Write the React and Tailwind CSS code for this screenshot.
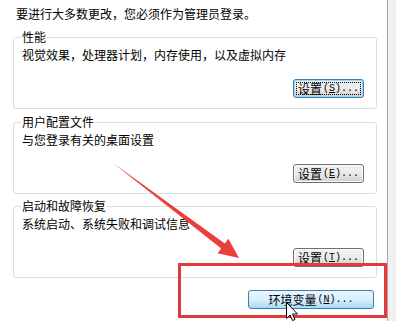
import React from 'react';

const font = { fontFamily: '"Noto Sans CJK SC", "Liberation Sans", sans-serif' };

const Button = ({ label, hotkey, focused, hover, className = '' }) => {
  const tone = hover
    ? 'border-[#3c7fb1] bg-gradient-to-b from-[#eaf6fd] via-[#d9f0fc] to-[#a7d9f5]'
    : focused
      ? 'border-[#3c7fb1] bg-gradient-to-b from-[#f2f2f2] via-[#ebebeb] to-[#cfcfcf] shadow-[inset_0_0_0_1px_#9fd8f7]'
      : 'border-[#707070] bg-gradient-to-b from-[#f2f2f2] via-[#ebebeb] to-[#cfcfcf] shadow-[inset_0_0_0_1px_#fcfcfc]';
  return (
    <div className={`h-[19px] rounded-[3px] border flex items-center justify-center p-[2px] ${tone} ${className}`}>
      <div
        className={`w-full h-full flex items-center justify-center whitespace-nowrap text-[12px] leading-none text-black ${
          focused ? 'outline outline-1 outline-dotted outline-black -outline-offset-1' : ''
        }`}
      >
        <span className="shrink-0">{label}</span>
        <span className="shrink-0 font-['Liberation_Mono',monospace] text-[10px] ml-[1px]">
          (<span className="underline">{hotkey}</span>)...
        </span>
      </div>
    </div>
  );
};

const Group = ({ title, desc, hotkey, focused }) => (
  <fieldset className="w-[364px] ml-[13px] border border-[#d5dfe5] rounded-[3px] pl-[7px] pr-[12px] pb-[10px] flex flex-col">
    <legend className="px-[1px] text-[12px] leading-[14px] text-black">{title}</legend>
    <div className="mt-[4px] pl-[1px] text-[12px] leading-[14px] text-black">{desc}</div>
    <div className="mt-[17px] flex justify-end">
      <Button label="设置" hotkey={hotkey} focused={focused} className="w-[71px]" />
    </div>
  </fieldset>
);

const App = () => {
  return (
    <div className="w-[396px] h-[321px] overflow-hidden flex bg-[#f0f0f0] relative" style={font}>
      <div className="w-[388px] h-full bg-white border-r border-[#a7a7a7] flex flex-col">
        <div className="pt-[7px] pl-[16px] text-[12px] leading-[14px] text-black">
          要进行大多数更改，您必须作为管理员登录。
        </div>
        <div className="mt-[9px] flex flex-col gap-[6px]">
          <Group title="性能" desc="视觉效果，处理器计划，内存使用，以及虚拟内存" hotkey="S" focused />
          <Group title="用户配置文件" desc="与您登录有关的桌面设置" hotkey="E" />
          <div className="-mt-[1px]">
            <Group title="启动和故障恢复" desc="系统启动、系统失败和调试信息" hotkey="T" />
          </div>
        </div>
        <div className="mt-[12px] flex justify-end pr-[13px]">
          <Button label="环境变量" hotkey="N" hover className="w-[126px]" />
        </div>
      </div>

      {/* annotation: red highlight box, arrow and cursor */}
      <div className="absolute left-[178px] top-[263px] w-[209px] h-[55px] border-[3px] border-[#e4383a]" />
      <svg className="absolute left-0 top-0 pointer-events-none" width="396" height="321" viewBox="0 0 396 321">
        <polygon
          points="113,163 224.8,243.6 228.4,238.8 239,258 217.6,253.2 221.2,248.4"
          fill="#ea3f3c"
        />
        <path
          d="M286.5 302.5 L286.5 318.5 L290 315 L292.5 320.5 L295 319.5 L292.5 314 L297.5 314 Z"
          fill="#ffffff"
          stroke="#000000"
          strokeWidth="1"
          strokeLinejoin="miter"
        />
      </svg>
    </div>
  );
};

export default App;
